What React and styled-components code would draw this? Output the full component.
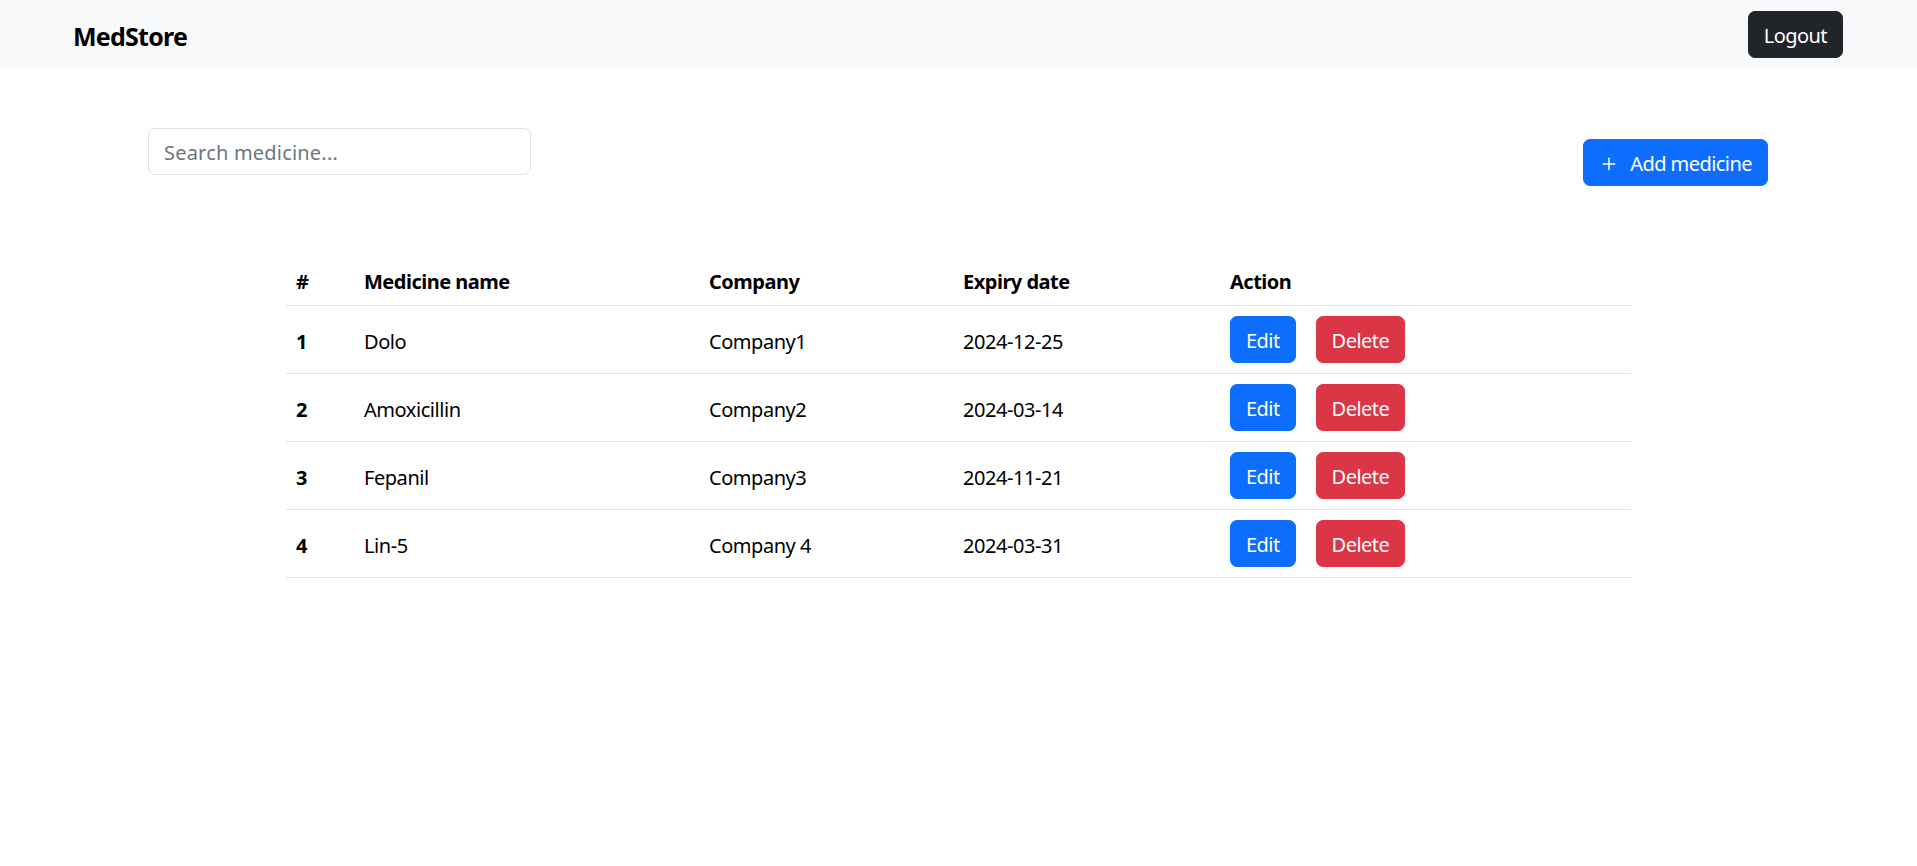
import React from "react";
import styled, { createGlobalStyle } from "styled-components";
import { Plus } from "lucide-react";

const GlobalStyle = createGlobalStyle`
  * { box-sizing: border-box; }
  body {
    margin: 0;
    font-family: "Noto Sans", "Open Sans", sans-serif;
    font-size: 20px;
    line-height: 30px;
    color: #212529;
    background: #fff;
  }
`;

const Navbar = styled.nav`
  height: 69px;
  background: #f8f9fa;
  display: flex;
  align-items: center;
  justify-content: space-between;
  padding: 0 74px 0 73px;
`;

const Brand = styled.div`
  font-size: 25px;
  font-weight: 700;
  color: #000;
  letter-spacing: -0.75px;
  padding-top: 2px;
`;

const Button = styled.button`
  font-family: inherit;
  font-size: 20px;
  line-height: 30px;
  height: 47px;
  padding: 2px 15px 0;
  border-radius: 7px;
  border: 1px solid ${(p) => p.$bg};
  background: ${(p) => p.$bg};
  color: #fff;
  display: inline-flex;
  align-items: center;
  cursor: pointer;
  margin-left: ${(p) => p.$ml || 0}px;
  margin-top: ${(p) => p.$mt || 0}px;
  letter-spacing: -0.55px;
`;

const Toolbar = styled.div`
  display: flex;
  justify-content: space-between;
  align-items: flex-start;
  padding: 59px 149px 0 148px;
`;

const Search = styled.input`
  width: 383px;
  height: 47px;
  font-family: inherit;
  font-size: 20px;
  padding: 2px 15px 0;
  border: 1px solid #dee2e6;
  border-radius: 7px;
  color: #212529;
  outline: none;
  letter-spacing: 0.2px;
  &::placeholder { color: #6c757d; }
`;

const PlusIcon = styled(Plus)`
  margin-right: 11px;
`;

const Table = styled.table`
  width: 1345px;
  margin: 69px auto 0;
  border-collapse: collapse;
  table-layout: fixed;
`;

const Th = styled.th`
  width: ${(p) => (p.$w ? `${p.$w}px` : "auto")};
  text-align: left;
  font-weight: 700;
  padding: 12px 10px 8px;
  border-bottom: 1px solid #dee2e6;
  color: #000;
  letter-spacing: -0.5px;
`;

const RowHead = styled.th`
  text-align: left;
  font-weight: 700;
  padding: 12px 10px 8px;
  border-bottom: 1px solid #dee2e6;
  color: #000;
`;

const Td = styled.td`
  padding: ${(p) => (p.$action ? "10px" : "12px 10px 8px")};
  border-bottom: 1px solid #dee2e6;
  color: #000;
  letter-spacing: -0.45px;
  vertical-align: middle;
`;

const Actions = styled.div`
  display: flex;
  align-items: center;
`;

const medicines = [
  { id: 1, name: "Dolo", company: "Company1", expiry: "2024-12-25" },
  { id: 2, name: "Amoxicillin", company: "Company2", expiry: "2024-03-14" },
  { id: 3, name: "Fepanil", company: "Company3", expiry: "2024-11-21" },
  { id: 4, name: "Lin-5", company: "Company 4", expiry: "2024-03-31" },
];

export default function App() {
  return (
    <>
      <GlobalStyle />
      <Navbar>
        <Brand>MedStore</Brand>
        <Button $bg="#212529">Logout</Button>
      </Navbar>
      <Toolbar>
        <Search placeholder="Search medicine..." />
        <Button $bg="#0d6efd" $mt={11}>
          <PlusIcon size={20} strokeWidth={1.8} />
          Add medicine
        </Button>
      </Toolbar>
      <Table>
        <thead>
          <tr>
            <Th $w={68}>#</Th>
            <Th $w={345}>Medicine name</Th>
            <Th $w={254}>Company</Th>
            <Th $w={267}>Expiry date</Th>
            <Th>Action</Th>
          </tr>
        </thead>
        <tbody>
          {medicines.map((m) => (
            <tr key={m.id}>
              <RowHead>{m.id}</RowHead>
              <Td>{m.name}</Td>
              <Td>{m.company}</Td>
              <Td>{m.expiry}</Td>
              <Td $action>
                <Actions>
                  <Button $bg="#0d6efd">Edit</Button>
                  <Button $bg="#dc3545" $ml={20}>Delete</Button>
                </Actions>
              </Td>
            </tr>
          ))}
        </tbody>
      </Table>
    </>
  );
}
